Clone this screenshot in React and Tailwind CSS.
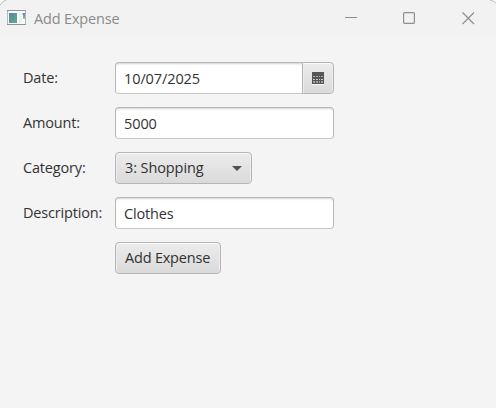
import React from "react";

const fieldBase =
  "h-8 border border-[#b9b9b9] border-b-[#c8c8c8] bg-white px-2 text-[#323232] outline-none shadow-[inset_0_2px_2px_-1px_#d4d4d4]";
const control =
  "flex h-8 items-center border border-[#b5b5b5] bg-linear-to-b from-[#ececec] to-[#dadada] text-[#323232] shadow-[inset_0_1px_0_#f8f8f8,inset_1px_0_0_#ededed,inset_-1px_0_0_#ededed]";

function AppIcon() {
  return (
    <svg width="19" height="16" viewBox="0 0 19 16" shapeRendering="crispEdges">
      <defs>
        <linearGradient id="pane" x1="0" y1="0" x2="1" y2="1">
          <stop offset="0" stopColor="#5c82a8" />
          <stop offset="1" stopColor="#5fae86" />
        </linearGradient>
        <linearGradient id="bar" x1="0" y1="0" x2="0" y2="1">
          <stop offset="0" stopColor="#5b86ad" />
          <stop offset="1" stopColor="#8cc4ae" />
        </linearGradient>
      </defs>
      <rect x="0.5" y="0.5" width="18" height="14" fill="#fbfbfb" stroke="#b4b8bd" />
      <path d="M0 0.5H19" stroke="#8f98a1" />
      <path d="M0 14.5H19" stroke="#8e9499" />
      <rect x="2" y="3" width="8" height="10" fill="url(#pane)" />
      <rect x="12" y="3" width="3" height="10" fill="#f0f0f0" />
      <rect x="16" y="3" width="2" height="6" fill="url(#bar)" />
      <rect x="15" y="3" width="1" height="2" fill="#c3d3dc" />
    </svg>
  );
}

function TitleBar() {
  return (
    <header className="relative flex h-[37px] items-start bg-[#f2f2f2] pl-[7px] text-[#8b8b8b]">
      <svg className="absolute left-0 top-0" width="7" height="7">
        <path d="M0 0H6Q2 1 0 5Z" fill="#fafafa" />
        <path d="M6 0.3Q2 1 0.3 5" fill="none" stroke="#bdbdbd" />
      </svg>
      <svg className="absolute right-0 top-0" width="7" height="7">
        <path d="M7 0H1Q5 1 7 3Z" fill="#fafafa" />
        <path d="M1 0.3Q5 0.8 6.8 3" fill="none" stroke="#bdbdbd" />
      </svg>
      <div className="mt-[10px] h-4 w-[19px]"><AppIcon /></div>
      <h1 className="ml-2 mt-[9px] text-[14.5px] leading-5 tracking-[-0.17px]">Add Expense</h1>
      <div className="ml-auto mr-[21px] mt-3 flex">
        <svg className="mr-[46px]" width="12" height="13" fill="none" stroke="#8f8f8f"><path d="M0 5.5H12" /></svg>
        <svg className="mr-[47px]" width="12" height="13" fill="none" stroke="#8f8f8f" strokeWidth="1.2"><rect x="0.6" y="0.6" width="10.8" height="10.8" rx="1" /></svg>
        <svg width="13" height="13" fill="none" stroke="#8f8f8f" strokeWidth="1.2"><path d="M0.5 0.5L12 12M12 0.5L0.5 12" /></svg>
      </div>
    </header>
  );
}

function CalendarIcon() {
  return (
    <svg width="12" height="13" shapeRendering="crispEdges">
      <rect y="1" width="12" height="12" fill="#ffffff" />
      <rect width="12" height="12" fill="#555555" />
      <g fill="#c9c9c9">
        <path d="M1 4h2v1H1zM4 4h2v1H4zM7 4h1v1H7zM9 4h2v1H9z" fill="#aaaaaa" />
        <path d="M1 7h2v1H1zM4 7h2v1H4zM7 7h1v1H7zM9 7h2v1H9z" />
        <path d="M1 9h2v2H1zM4 9h2v2H4zM7 9h1v2H7zM9 9h2v2H9z" fill="#a0a0a0" />
      </g>
    </svg>
  );
}

function Row({ label, children }) {
  return (
    <div className="flex h-8 items-center">
      <label className="w-[92px] shrink-0 whitespace-nowrap tracking-[-0.17px]">{label}</label>
      {children}
    </div>
  );
}

export default function App() {
  return (
    <div className="h-[408px] w-[496px] overflow-hidden bg-[#f4f4f4] font-['Open_Sans','Noto_Sans',sans-serif] text-[14.5px] leading-5 text-[#333333]">
      <TitleBar />
      <main className="flex flex-col gap-[13px] pl-[23px] pt-[25px]">
        <Row label="Date:">
          <div className="flex">
            <input className={fieldBase + " w-[187px] rounded-l border-r-0 tracking-[-0.1px]"} defaultValue="10/07/2025" />
            <button className={control + " w-8 justify-center rounded-r"} aria-label="Open calendar">
              <CalendarIcon />
            </button>
          </div>
        </Row>
        <Row label="Amount:">
          <input className={fieldBase + " w-[219px] rounded tracking-[-0.1px]"} defaultValue="5000" />
        </Row>
        <Row label="Category:">
          <button className={control + " w-[137px] justify-between rounded px-[9px]"}>
            <span className="tracking-[-0.1px]">3: Shopping</span>
            <svg width="10" height="5"><path d="M0 0H10L5 5Z" fill="#505050" /></svg>
          </button>
        </Row>
        <Row label="Description:">
          <input className={fieldBase + " w-[219px] rounded tracking-[-0.15px]"} defaultValue="Clothes" />
        </Row>
        <Row label="">
          <button className={control + " w-[106px] rounded pl-[9px] whitespace-nowrap tracking-[-0.2px]"}>Add Expense</button>
        </Row>
      </main>
    </div>
  );
}
